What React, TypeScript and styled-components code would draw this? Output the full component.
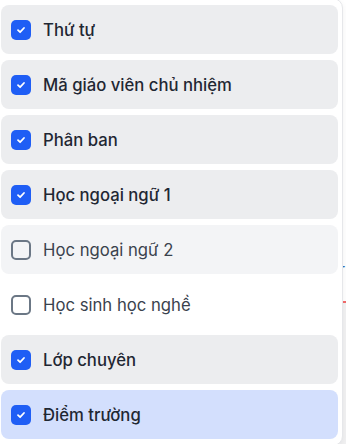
import React from "react";
import styled, { createGlobalStyle } from "styled-components";

const Global = createGlobalStyle`
  html, body { margin: 0; padding: 0; }
  body {
    width: 346px;
    height: 444px;
    overflow: hidden;
    background: #ffffff;
    font-family: Inter, "Noto Sans", sans-serif;
  }
`;

const Page = styled.div`
  position: relative;
  width: 346px;
  height: 444px;
  overflow: hidden;
  background: #ffffff;
  display: flex;
  justify-content: flex-end;
`;

const Backdrop = styled.div`
  width: 8px;
  display: flex;
  flex-direction: column;
  padding-top: 259px;
`;

const BackdropText = styled.span`
  height: 42px;
  font-size: 16px;
  line-height: 20px;
  color: #2f6fb8;
  padding-left: 1px;
`;

const BackdropLine = styled.div`
  height: 2px;
  background: #f26b6b;
`;

const BackdropGrey = styled.div`
  flex: 1;
  background: #f1f1f2;
`;

const Panel = styled.div`
  position: absolute;
  left: -6px;
  top: -2px;
  width: 349px;
  padding: 6px 4px 6px 6px;
  box-sizing: border-box;
  background: #ffffff;
  border: 1px solid #e6e7ea;
  border-radius: 10px;
  box-shadow: 0 2px 6px rgba(15, 23, 42, 0.06);
  display: flex;
  flex-direction: column;
  gap: 6px;
`;

type Tone = "checked" | "hover" | "plain" | "active";

const bg: Record<Tone, string> = {
  checked: "#ecedef",
  hover: "#f3f4f6",
  plain: "transparent",
  active: "#d3dffd",
};

const Row = styled.label<{ $tone: Tone }>`
  display: flex;
  align-items: center;
  gap: 12px;
  height: 49px;
  padding: 0 10px;
  box-sizing: border-box;
  border-radius: 8px;
  background: ${(p) => bg[p.$tone]};
`;

const Box = styled.span<{ $on: boolean }>`
  width: 20px;
  height: 20px;
  box-sizing: border-box;
  border-radius: 5px;
  flex: none;
  display: flex;
  align-items: center;
  justify-content: center;
  background: ${(p) => (p.$on ? "#1f5ef5" : "transparent")};
  border: ${(p) => (p.$on ? "none" : "2px solid #6b7785")};
`;

const Label = styled.span<{ $on: boolean }>`
  font-size: 16.7px;
  line-height: 20px;
  font-weight: ${(p) => (p.$on ? 550 : 400)};
  color: ${(p) => (p.$on ? "#1f2733" : "#3a424d")};
  white-space: nowrap;
`;

const Check = () => (
  <svg width="12" height="12" viewBox="0 0 12 12" fill="none">
    <path
      d="M3 6.2 L5.1 8.2 L9 4"
      stroke="#ffffff"
      strokeWidth="1.8"
      strokeLinecap="round"
      strokeLinejoin="round"
    />
  </svg>
);

const items: { label: string; on: boolean; tone: Tone }[] = [
  { label: "Thứ tự", on: true, tone: "checked" },
  { label: "Mã giáo viên chủ nhiệm", on: true, tone: "checked" },
  { label: "Phân ban", on: true, tone: "checked" },
  { label: "Học ngoại ngữ 1", on: true, tone: "checked" },
  { label: "Học ngoại ngữ 2", on: false, tone: "hover" },
  { label: "Học sinh học nghề", on: false, tone: "plain" },
  { label: "Lớp chuyên", on: true, tone: "checked" },
  { label: "Điểm trường", on: true, tone: "active" },
];

export default function App() {
  return (
    <Page>
      <Global />
      <Backdrop>
        <BackdropText>r</BackdropText>
        <BackdropLine />
        <BackdropGrey />
      </Backdrop>
      <Panel>
        {items.map((it) => (
          <Row key={it.label} $tone={it.tone}>
            <Box $on={it.on}>{it.on && <Check />}</Box>
            <Label $on={it.on}>{it.label}</Label>
          </Row>
        ))}
      </Panel>
    </Page>
  );
}
